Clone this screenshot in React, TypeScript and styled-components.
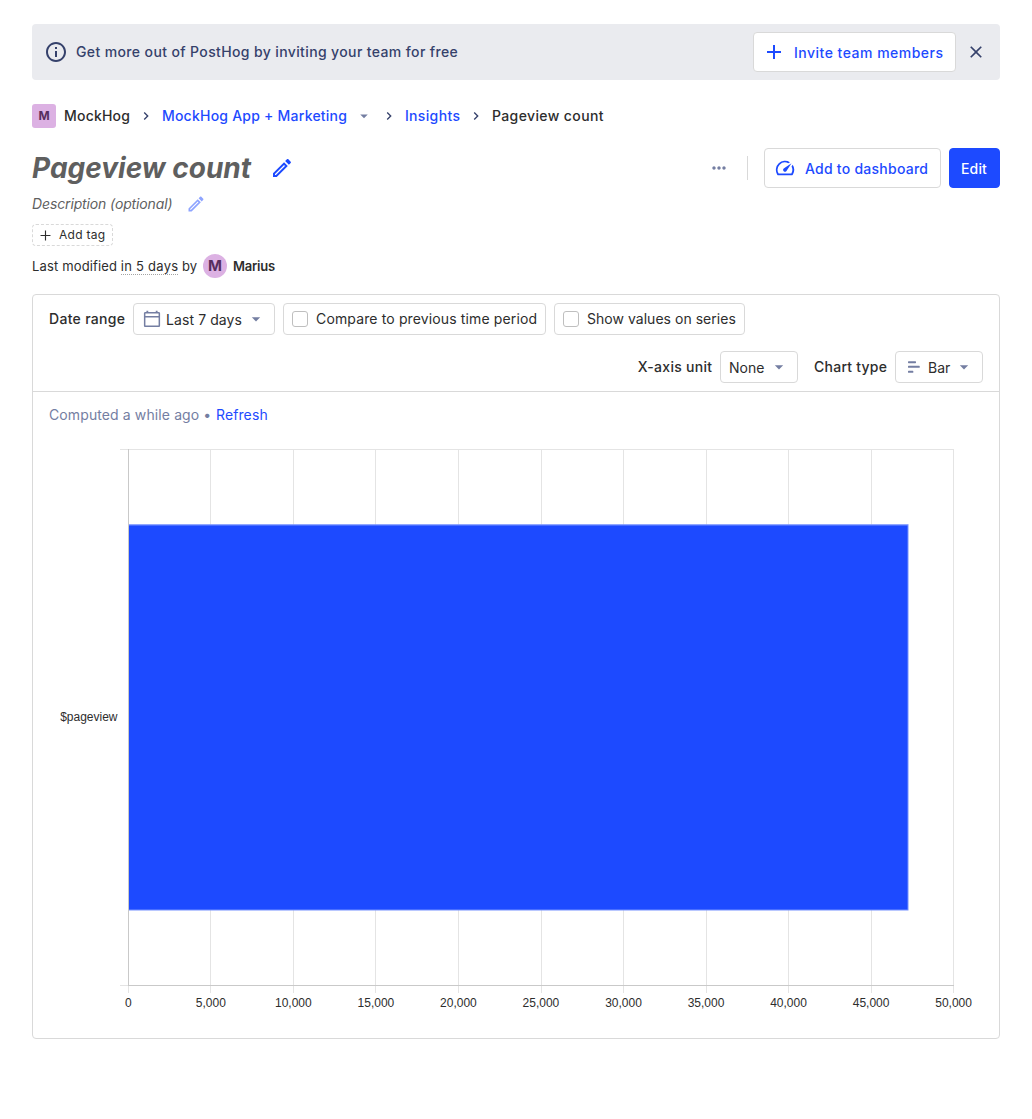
import React from "react";
import styled, { createGlobalStyle } from "styled-components";

const GlobalStyle = createGlobalStyle`
  *, *::before, *::after { box-sizing: border-box; }
  body {
    margin: 0;
    background: #fff;
    color: #2d2d2d;
    font-family: Inter, "Noto Sans", sans-serif;
    font-size: 14px;
    line-height: 20px;
  }
`;

const Page = styled.main`
  display: flex;
  flex-direction: column;
  padding: 24px 32px 80px;
`;

const Glyph = styled.svg<{ $size: number }>`
  display: block;
  flex: none;
  width: ${(p) => p.$size}px;
  height: ${(p) => p.$size}px;
  fill: currentColor;
`;

const paths = {
  info: "M11 7h2v2h-2zm0 4h2v6h-2zm1-9C6.48 2 2 6.48 2 12s4.48 10 10 10 10-4.48 10-10S17.52 2 12 2zm0 18c-4.41 0-8-3.59-8-8s3.59-8 8-8 8 3.59 8 8-3.59 8-8 8z",
  plus: "M19 13h-6v6h-2v-6H5v-2h6V5h2v6h6v2z",
  thinPlus: "M19 12.800h-6.200V19h-1.600v-6.200H5v-1.600h6.200V5h1.600v6.200H19z",
  close:
    "M19 6.41L17.59 5 12 10.59 6.41 5 5 6.41 10.59 12 5 17.59 6.41 19 12 13.41 17.59 19 19 17.59 13.41 12z",
  chevron: "M10 6L8.59 7.41 13.17 12l-4.58 4.59L10 18l6-6z",
  caret: "M7 10l5 5 5-5z",
  edit: "M14.06 9.02l.92.92L5.92 19H5v-.92l9.06-9.06M17.66 3c-.25 0-.51.1-.7.29l-1.83 1.83 3.75 3.75 1.83-1.83c.39-.39.39-1.02 0-1.41l-2.34-2.34c-.2-.2-.45-.29-.71-.29zm-3.6 3.19L3 17.25V21h3.75L17.81 9.94l-3.75-3.75z",
  gauge:
    "M20.38 8.57l-1.23 1.85a8 8 0 0 1-.22 7.58H5.07A8 8 0 0 1 15.58 6.85l1.85-1.23A10 10 0 0 0 3.35 19a2 2 0 0 0 1.72 1h13.85a2 2 0 0 0 1.74-1 10 10 0 0 0-.27-10.44zm-9.79 6.84a2 2 0 0 0 2.83 0l5.66-8.49-8.49 5.66a2 2 0 0 0 0 2.83z",
  dots: "M6 10c-1.1 0-2 .9-2 2s.9 2 2 2 2-.9 2-2-.9-2-2-2zm12 0c-1.1 0-2 .9-2 2s.9 2 2 2 2-.9 2-2-.9-2-2-2zm-6 0c-1.1 0-2 .9-2 2s.9 2 2 2 2-.9 2-2-.9-2-2-2z",
  calendar:
    "M20 3.600h-1.300V2h-2.200v1.600H7.500V2H5.300v1.600H4c-1 0-1.700.7-1.700 1.600V20c0 .9.7 1.700 1.700 1.700h16c1 0 1.700-.8 1.700-1.700V5.200c0-.9-.7-1.600-1.700-1.600zm-.1 16.200H4.100V10.200h15.800zm0-11.400H4.100V5.400h15.800z",
  bars: "M5.500 5h8.200a.7.7 0 0 1 .7.7v1a.7.7 0 0 1-.7.7H5.500a.7.7 0 0 1-.7-.7v-1a.7.7 0 0 1 .7-.7zm0 5.600h12.700a.7.7 0 0 1 .7.7v1a.7.7 0 0 1-.7.7H5.500a.7.7 0 0 1-.7-.7v-1a.7.7 0 0 1 .7-.7zm0 6h5a.7.7 0 0 1 .7.7v1a.7.7 0 0 1-.7.7h-5a.7.7 0 0 1-.7-.7v-1a.7.7 0 0 1 .7-.7z",
};

function Icon({ name, size }: { name: keyof typeof paths; size: number }) {
  return (
    <Glyph viewBox="0 0 24 24" $size={size} aria-hidden>
      <path d={paths[name]} />
    </Glyph>
  );
}

/* Tracked text whose trailing space does not widen its box. */
const Text = styled.span<{ $track: number }>`
  margin-right: ${(p) => -p.$track}px;
  letter-spacing: ${(p) => p.$track}px;
  white-space: pre;
`;

const Banner = styled.div`
  display: flex;
  align-items: center;
  height: 56px;
  padding: 8px 14px 8px 12px;
  border-radius: 4px;
  background: #eaebef;
  color: #35416b;
  font-weight: 500;
`;

const BannerText = styled.span`
  flex: 1;
  margin-left: 8px;
`;

const Button = styled.button<{ $primary?: boolean; $width: number }>`
  display: flex;
  align-items: center;
  gap: 8px;
  width: ${(p) => p.$width}px;
  height: 40px;
  padding: 2px 0 0 ${(p) => (p.$primary ? 11 : 8)}px;
  border: 1px solid ${(p) => (p.$primary ? "#1d4aff" : "#d9d9d9")};
  border-radius: 4px;
  background: ${(p) => (p.$primary ? "#1d4aff" : "#fff")};
  color: ${(p) => (p.$primary ? "#fff" : "#1d4aff")};
  font: 500 14px/20px Inter, sans-serif;
  svg { margin-top: -2px; }
`;

const IconSlot = styled.span`
  display: flex;
  justify-content: center;
  width: 24px;
`;

const CloseButton = styled.button`
  display: flex;
  margin-left: 10px;
  padding: 0;
  border: 0;
  background: none;
  color: #35416b;
`;

const Breadcrumbs = styled.nav`
  display: flex;
  align-items: center;
  height: 24px;
  margin-top: 24px;
  font-weight: 500;
`;

const Avatar = styled.span<{ $round?: boolean }>`
  display: flex;
  align-items: center;
  justify-content: center;
  width: 24px;
  height: 24px;
  border-radius: ${(p) => (p.$round ? "50%" : "3px")};
  background: #dcb1e3;
  color: #572e5e;
  font-size: ${(p) => (p.$round ? 15 : 12)}px;
  font-weight: 700;
`;

const Crumb = styled(Text)<{ $link?: boolean; $gap?: number }>`
  margin-left: ${(p) => p.$gap ?? 0}px;
  color: ${(p) => (p.$link ? "#1d4aff" : "#2d2d2d")};
`;

const Separator = styled.span`
  display: flex;
  margin: 0 8px;
  color: #35416b;
`;

const Muted = styled.span<{ $gap?: number }>`
  display: flex;
  margin-left: ${(p) => p.$gap ?? 0}px;
  color: #747ea2;
`;

const TitleRow = styled.header`
  display: flex;
  align-items: center;
  justify-content: space-between;
  height: 40px;
  margin-top: 20px;
`;

const TitleGroup = styled.div`
  display: flex;
  align-items: center;
  gap: 19px;
  color: #1d4aff;
`;

const Title = styled.h1`
  margin: 0;
  color: #5f5f5f;
  font-size: 28px;
  font-style: italic;
  font-weight: 700;
  line-height: 40px;
`;

const Actions = styled.div`
  display: flex;
  align-items: center;
  gap: 8px;
`;

const Divider = styled.span`
  width: 1px;
  height: 24px;
  margin: 0 8px 0 10px;
  background: #d9d9d9;
`;

const Description = styled.div`
  display: flex;
  align-items: center;
  gap: 13px;
  height: 20px;
  margin-top: 6px;
  color: #5f5f5f;
  font-style: italic;
  svg { color: #8ea4ff; }
`;

const Tag = styled.button`
  display: flex;
  align-items: center;
  align-self: flex-start;
  gap: 5px;
  height: 22px;
  margin-top: 10px;
  padding: 0 7px 0 4px;
  border: 1px dashed #d9d9d9;
  border-radius: 4px;
  background: #fff;
  color: #2d2d2d;
  font: 400 12px/20px Inter, sans-serif;
`;

const Modified = styled.div`
  display: flex;
  align-items: center;
  height: 24px;
  margin-top: 8px;
  font-size: 13px;
  white-space: pre;
`;

const Dotted = styled.span`
  height: 17px;
  border-bottom: 1px dotted #a3a3a3;
  letter-spacing: 0.25px;
  line-height: 17px;
`;

const Author = styled.div`
  display: flex;
  align-items: center;
  gap: 6px;
  margin-left: 6px;
  font-weight: 600;
`;

const Card = styled.section`
  height: 745px;
  margin-top: 16px;
  border: 1px solid #d9d9d9;
  border-radius: 4px;
`;

const Filters = styled.div`
  display: flex;
  flex-direction: column;
  gap: 16px;
  padding: 8px 16px;
  border-bottom: 1px solid #d9d9d9;
`;

const FilterRow = styled.div<{ $end?: boolean }>`
  display: flex;
  align-items: center;
  gap: 8px;
  justify-content: ${(p) => (p.$end ? "flex-end" : "flex-start")};
`;

const Label = styled(Text)<{ $gap?: number }>`
  margin-left: ${(p) => p.$gap ?? 0}px;
  font-weight: 500;
`;

const Select = styled.button<{ $width: number }>`
  display: flex;
  align-items: center;
  width: ${(p) => p.$width}px;
  height: 32px;
  padding: 0 8px;
  border: 1px solid #d9d9d9;
  border-radius: 4px;
  background: #fff;
  color: #2d2d2d;
  font: 400 14px/20px Inter, sans-serif;
`;

const SelectText = styled.span<{ $gap?: number; $track?: number }>`
  margin-left: ${(p) => p.$gap ?? 0}px;
  padding-top: 2px;
  letter-spacing: ${(p) => p.$track ?? 0}px;
`;

const CheckLabel = styled.label`
  display: flex;
  align-items: center;
  gap: 8px;
  height: 32px;
  padding: 0 8px;
  border: 1px solid #d9d9d9;
  border-radius: 4px;
`;

const Box = styled.span`
  width: 16px;
  height: 16px;
  border: 1px solid #bfbfbf;
  border-radius: 3px;
`;

const Computed = styled.p`
  margin: 13px 16px 0;
  color: #747ea2;
  letter-spacing: 0.11px;
`;

const Refresh = styled.a`
  margin-left: 0.6px;
  color: #1d4aff;
`;

const ChartArea = styled.svg`
  display: block;
  margin: 16px 0 0 16px;
  font-family: "Liberation Sans", Arial, sans-serif;
  font-size: 12px;
  fill: #2d2d2d;
`;

const gridX = [128, 210, 293, 375, 458, 541, 623, 706, 788, 871, 953];

function Chart() {
  return (
    <ChartArea width="934" height="590" viewBox="49 441 934 590">
      <rect x="120" y="449" width="834" height="1" fill="#e4e4e4" />
      <rect x="120" y="985" width="834" height="1" fill="#e4e4e4" />
      {gridX.map((x, i) => (
        <g key={x}>
          <rect x={x} y="449" width="1" height="544" fill="#e4e4e4" />
          <text x={128.3 + i * 82.53} y="1007" textAnchor="middle">
            {(i * 5000).toLocaleString("en-US")}
          </text>
        </g>
      ))}
      <rect x="128.500" y="524.200" width="780" height="386.300" fill="#7792ff" />
      <rect x="129" y="525.500" width="778.500" height="384" fill="#1d4aff" />
      <rect x="128" y="449" width="1" height="537" fill="#c9c9c9" />
      <rect x="128" y="985" width="826" height="1" fill="#c9c9c9" />
      <text x="117.500" y="721" textAnchor="end">$pageview</text>
    </ChartArea>
  );
}

export default function App() {
  return (
    <Page>
      <GlobalStyle />
      <Banner>
        <Icon name="info" size={24} />
        <BannerText>
          <Text $track={0.375}>Get more out of PostHog by inviting your team for free</Text>
        </BannerText>
        <Button $width={203}>
          <Icon name="plus" size={24} />
          <Text $track={0.49}>Invite team members</Text>
        </Button>
        <CloseButton aria-label="Close">
          <Icon name="close" size={20} />
        </CloseButton>
      </Banner>

      <Breadcrumbs>
        <Avatar>M</Avatar>
        <Crumb $track={0.2} $gap={8}>MockHog</Crumb>
        <Separator><Icon name="chevron" size={16} /></Separator>
        <Crumb $track={0.23} $link>MockHog App + Marketing</Crumb>
        <Muted $gap={8}><Icon name="caret" size={18} /></Muted>
        <Separator><Icon name="chevron" size={16} /></Separator>
        <Crumb $track={0.34} $link>Insights</Crumb>
        <Separator><Icon name="chevron" size={16} /></Separator>
        <Crumb $track={0.39}>Pageview count</Crumb>
      </Breadcrumbs>

      <TitleRow>
        <TitleGroup>
          <Title>Pageview count</Title>
          <Icon name="edit" size={24} />
        </TitleGroup>
        <Actions>
          <Muted><Icon name="dots" size={20} /></Muted>
          <Divider />
          <Button $width={177}>
            <IconSlot><Icon name="gauge" size={22} /></IconSlot>
            <Text $track={0.25}>Add to dashboard</Text>
          </Button>
          <Button $primary $width={51}><Text $track={0.15}>Edit</Text></Button>
        </Actions>
      </TitleRow>

      <Description>
        <Text $track={-0.13}>Description (optional)</Text>
        <Icon name="edit" size={20} />
      </Description>
      <Tag>
        <Icon name="thinPlus" size={17} />
        <Text $track={0.3}>Add tag</Text>
      </Tag>
      <Modified>
        <Text $track={0.15}>Last modified </Text>
        <Dotted>in 5 days</Dotted>
        <span> by</span>
        <Author>
          <Avatar $round>M</Avatar>
          <Text $track={-0.25}>Marius</Text>
        </Author>
      </Modified>

      <Card>
        <Filters>
          <FilterRow>
            <Label $track={0.31}>Date range</Label>
            <Select $width={142}>
              <Muted><Icon name="calendar" size={20} /></Muted>
              <SelectText $gap={4} $track={0.08}>Last 7 days</SelectText>
              <Muted $gap={4}><Icon name="caret" size={20} /></Muted>
            </Select>
            <CheckLabel><Box /><Text $track={0.13}>Compare to previous time period</Text></CheckLabel>
            <CheckLabel><Box /><Text $track={0.03}>Show values on series</Text></CheckLabel>
          </FilterRow>
          <FilterRow $end>
            <Label $track={0.28}>X-axis unit</Label>
            <Select $width={78}>
              <SelectText>None</SelectText>
              <Muted $gap={5}><Icon name="caret" size={20} /></Muted>
            </Select>
            <Label $track={0.24} $gap={8}>Chart type</Label>
            <Select $width={88}>
              <Muted><Icon name="bars" size={20} /></Muted>
              <SelectText $gap={4}>Bar</SelectText>
              <Muted $gap={4}><Icon name="caret" size={20} /></Muted>
            </Select>
          </FilterRow>
        </Filters>
        <Computed>
          Computed a while ago • <Refresh>Refresh</Refresh>
        </Computed>
        <Chart />
      </Card>
    </Page>
  );
}
